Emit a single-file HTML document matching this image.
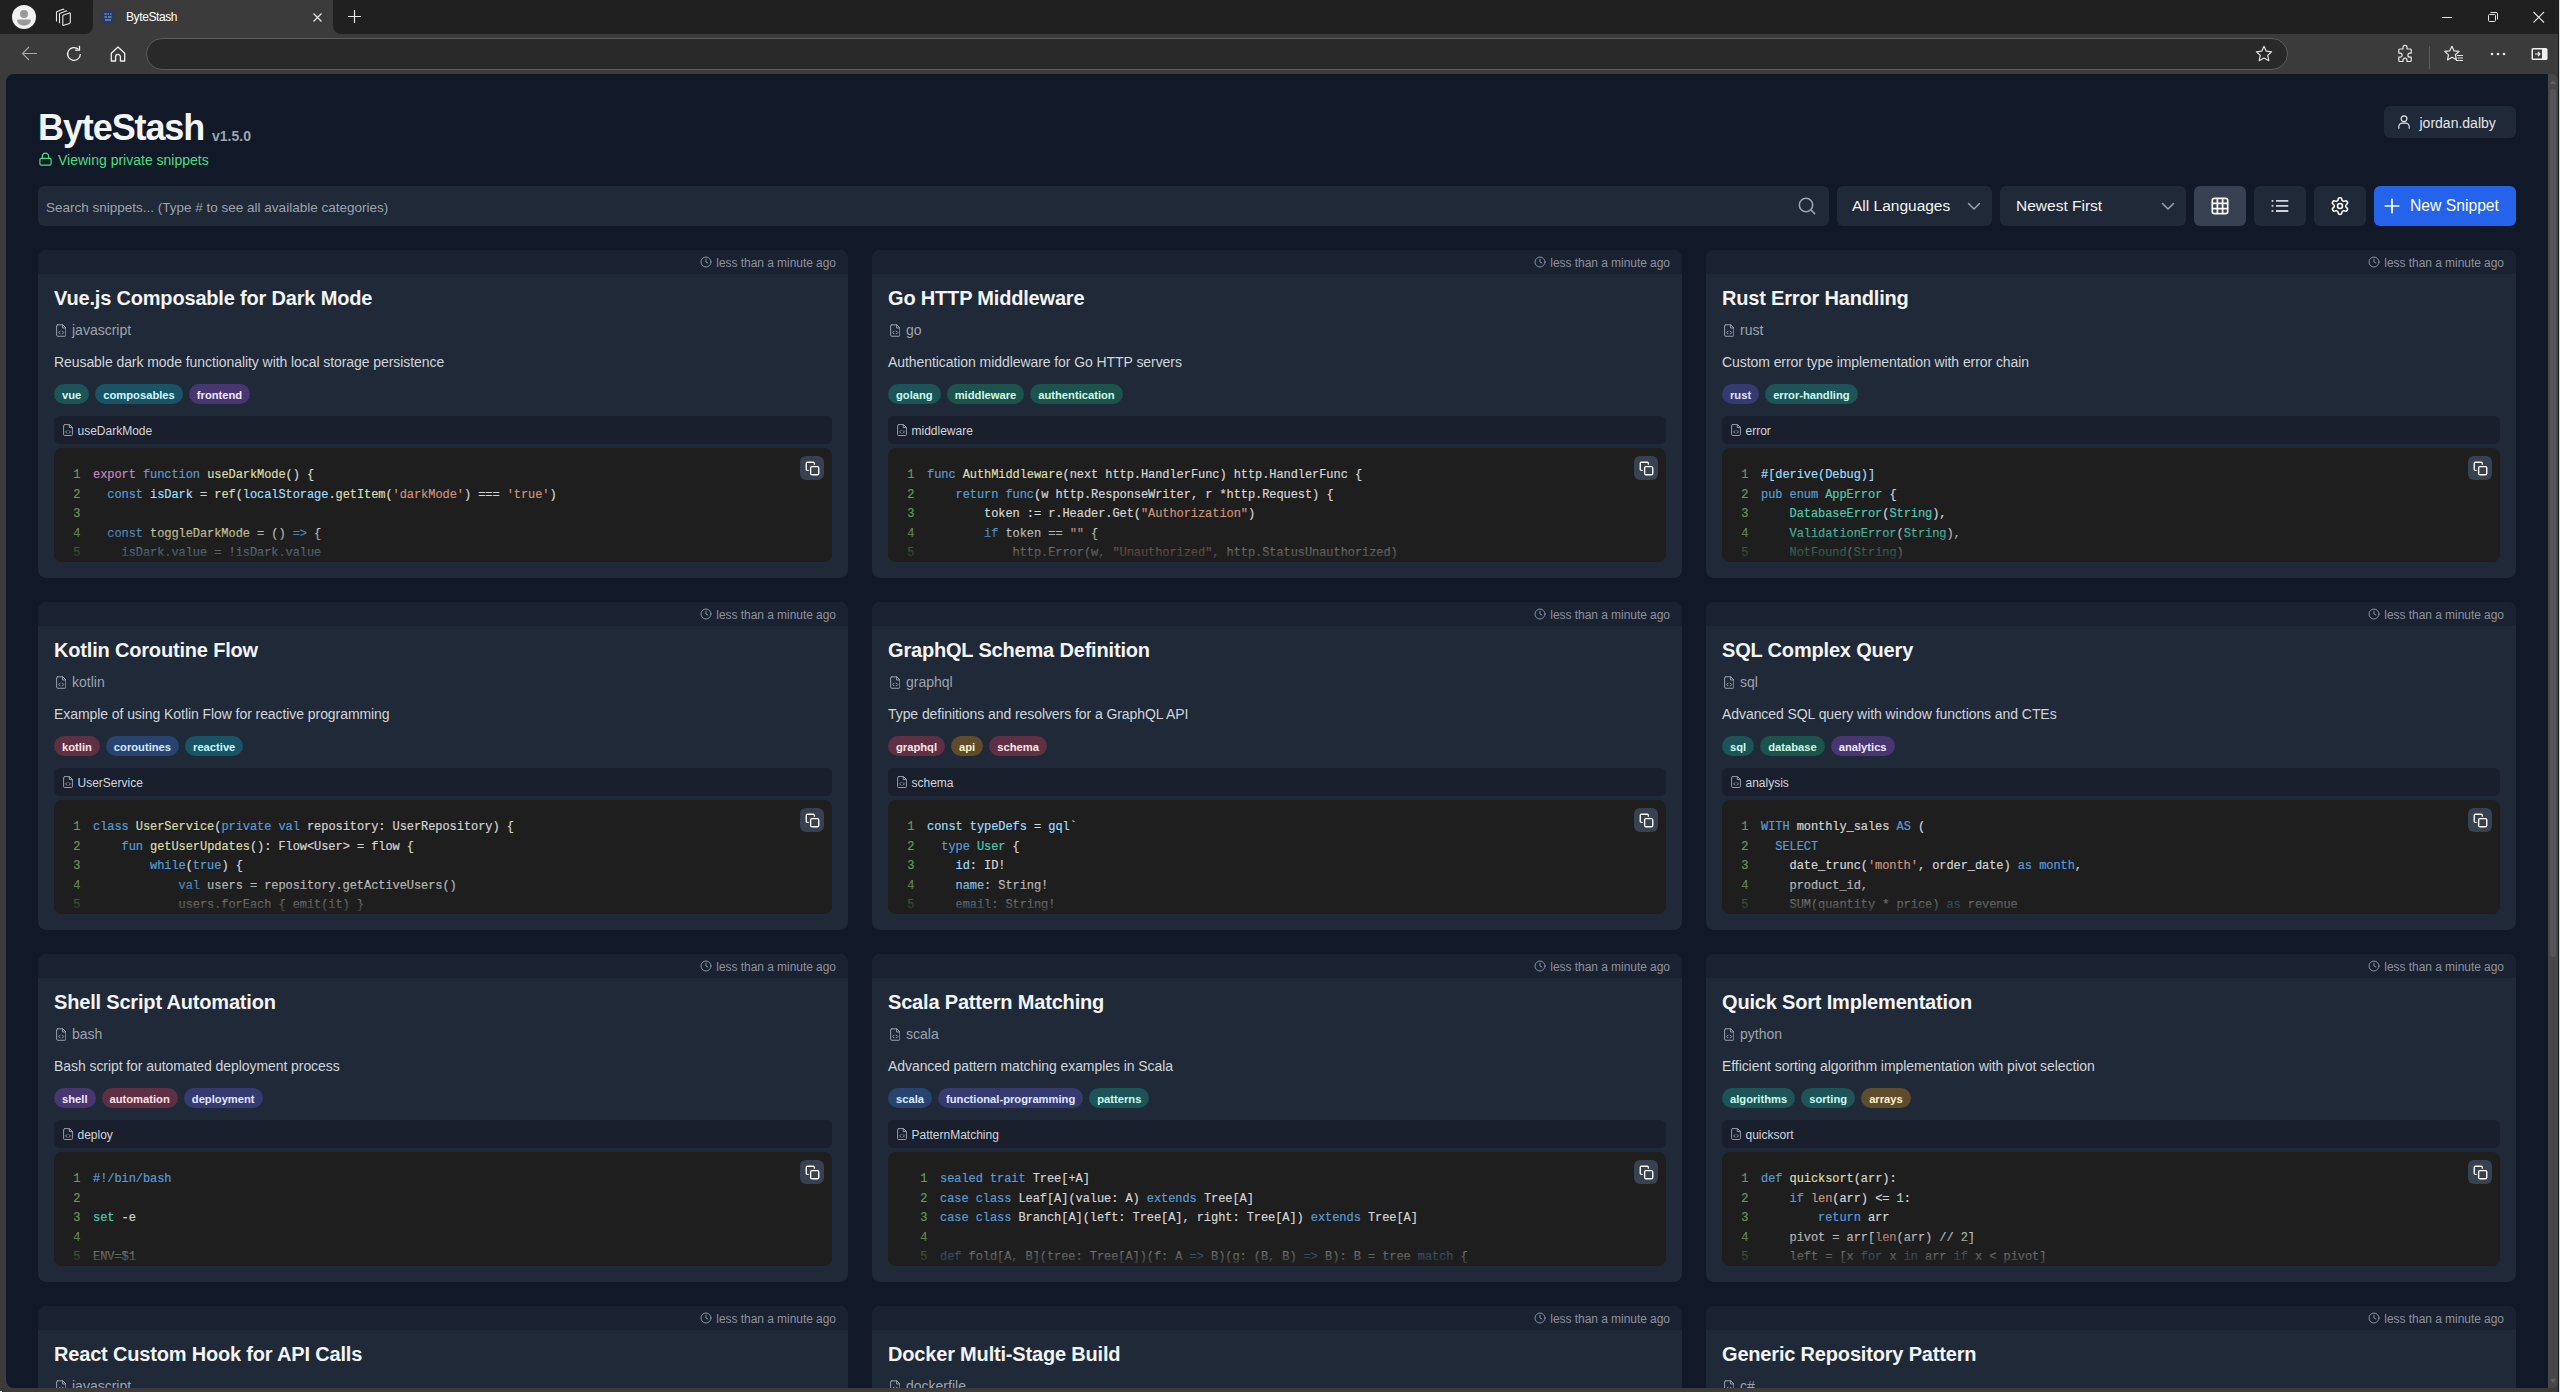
<!DOCTYPE html>
<html><head><meta charset="utf-8"><title>ByteStash</title>
<style>
*{box-sizing:border-box}
html,body{margin:0;padding:0}
body{width:2560px;height:1392px;overflow:hidden;background:#3b3b3b;position:relative;font-family:"Liberation Sans",sans-serif;}
#titlebar{position:absolute;left:0;top:0;width:2560px;height:34px}
#toolbar{position:absolute;left:0;top:34px;width:2560px;height:40px;background:#3b3b3b}
#vp{position:absolute;left:6px;top:74px;width:2542px;height:1314px;background:#111827;border-top-left-radius:8px;border-bottom-left-radius:8px;overflow:hidden}
.abs{position:absolute}
.card{position:absolute;width:810px;height:328px;background:#1f2937;border-radius:8px;overflow:hidden}
.chead{position:absolute;left:0;top:0;width:810px;height:24px;background:#1a2130}
.ts{position:absolute;right:12px;top:5px;height:14px;display:flex;align-items:center;gap:4.5px;color:#8a919e;font-size:12px;white-space:nowrap;letter-spacing:-0.05px}
.ts span{position:relative;top:1px}
.ts svg{width:12px;height:12px}
.ctitle{position:absolute;left:16px;top:36px;font-size:20px;font-weight:700;color:#f3f4f6;white-space:nowrap;line-height:24px;letter-spacing:-0.18px}
.clang{position:absolute;left:16px;top:71px;font-size:14px;color:#9ca3af;display:flex;align-items:center;gap:7.5px;line-height:18px;white-space:nowrap}
.clang svg{width:10.5px;height:13px;position:relative;top:0px;left:1.5px}
.cdesc{position:absolute;left:16px;top:103px;font-size:14px;color:#d1d5db;line-height:18px;white-space:nowrap;letter-spacing:-0.07px}
.ctags{position:absolute;left:16px;top:134px;display:flex;gap:6px}
.tag{display:inline-block;height:20px;line-height:20px;padding:0 8px;border-radius:10px;font-size:11.2px;font-weight:700}
.fbar{position:absolute;left:16px;top:166px;width:778px;height:27.5px;background:#1a1f2d;border-radius:6px;display:flex;align-items:center;gap:4.5px;padding-left:9px;padding-top:2px;color:#9ca3af;font-size:12px}
.fbar svg{width:10px;height:12px;position:relative;top:-1px}
.fbar span{color:#d1d5db}
.cblock{position:absolute;left:16px;top:198px;width:778px;height:114px;background:#1e1e1e;border-radius:8px;overflow:hidden}
.lines{position:absolute;left:0;top:18px;font-family:"Liberation Mono",monospace;font-size:12px;line-height:19.5px;white-space:pre;color:#d4d4d4;letter-spacing:-0.07px}
.ln{height:19.5px}
.num{display:inline-block;text-align:right;color:#6a9955;margin-right:12.5px;padding-left:13.5px;box-sizing:content-box}
.fade{position:absolute;left:0;right:0;bottom:0;height:36px;background:linear-gradient(to bottom,rgba(30,30,30,0),rgba(30,30,30,0.9))}
.copy{position:absolute;right:8px;top:8px;width:24px;height:24px;border-radius:6px;background:#374151;display:flex;align-items:center;justify-content:center;color:#fff}
.tag span{position:relative;top:1px}
.lines{-webkit-text-stroke:0.2px currentColor}

</style></head>
<body>
<div id="titlebar">
  <div class="abs" style="left:0;top:0;width:93px;height:34px;background:#202020;border-bottom-right-radius:8px"></div>
  <div class="abs" style="left:333px;top:0;width:2227px;height:34px;background:#202020;border-bottom-left-radius:8px"></div>
</div>
<div class="abs" style="left:93px;top:0;width:240px;height:40px;background:#3b3b3b;border-top-left-radius:8px;border-top-right-radius:8px"></div>
<!-- profile -->
<svg class="abs" style="left:12px;top:5px" width="24" height="24" viewBox="0 0 24 24"><circle cx="12" cy="12" r="12" fill="#f2f2f2"/><circle cx="12" cy="9" r="4" fill="#9a9a9a"/><path d="M6.2 14.5h11.6a1 1 0 0 1 1 1.2 6.8 5 0 0 1-13.6 0 1 1 0 0 1 1-1.2z" fill="#9a9a9a"/></svg>
<!-- tabs icon -->
<svg class="abs" style="left:55px;top:8px" width="18" height="18" viewBox="0 0 18 18" fill="none" stroke="#e8e8e8" stroke-width="1.1"><path d="M1.5 13.5V4.6q0-.8.8-1.1l5.6-2.2q.9-.3.9.6"/><path d="M4.5 15.2V6.3q0-.8.8-1.1l5.6-2.2q.9-.3.9.6"/><path d="M7.8 16.5V8q0-.8.8-1.1l5.8-1.9q.9-.3.9.6v8.7q0 .8-.8 1.1l-5.8 1.9q-.9.3-.9-.8z"/></svg>
<!-- favicon -->
<svg class="abs" style="left:101px;top:9px" width="14" height="16" viewBox="0 0 14 16"><path d="M3 1.5h8l2 3v7l-2 3H3l-2-3v-7z" fill="#243a6b"/><path d="M3.5 5h2M6.5 5h1.5M9 5h1.5M3.5 8h2.5M7 8h3.5M4 11h6" stroke="#9fb4e0" stroke-width="1.1"/></svg>
<div class="abs" style="left:126px;top:9px;font-size:12px;color:#ffffff;line-height:16px;white-space:nowrap;letter-spacing:-0.4px">ByteStash</div>
<svg class="abs" style="left:312px;top:12px" width="11" height="11" viewBox="0 0 11 11" stroke="#e8e8e8" stroke-width="1.2"><path d="M1.5 1.5l8 8M9.5 1.5l-8 8"/></svg>
<svg class="abs" style="left:347px;top:9px" width="15" height="15" viewBox="0 0 15 15" stroke="#e8e8e8" stroke-width="1.2"><path d="M7.5 1v13M1 7.5h13"/></svg>
<!-- window controls -->
<svg class="abs" style="left:2440px;top:10px" width="14" height="14" viewBox="0 0 14 14" stroke="#e8e8e8" stroke-width="1"><path d="M2 7.5h10"/></svg>
<svg class="abs" style="left:2486px;top:10px" width="14" height="14" viewBox="0 0 14 14" fill="none" stroke="#e8e8e8" stroke-width="1"><rect x="2.5" y="4.5" width="7" height="7" rx="1.2"/><path d="M4.5 2.5h5.5a1.5 1.5 0 0 1 1.5 1.5v5.5"/></svg>
<svg class="abs" style="left:2532px;top:10px" width="14" height="14" viewBox="0 0 14 14" stroke="#e8e8e8" stroke-width="1.1"><path d="M1.5 2l10.5 10.5M12 2L1.5 12.5"/></svg>
<!-- toolbar -->
<svg class="abs" style="left:20px;top:44px" width="20" height="20" viewBox="0 0 20 20" fill="none" stroke="#a8a8a8" stroke-width="1.1"><path d="M17 9.5H2.5M9 3L2.5 9.5 9 16"/></svg>
<svg class="abs" style="left:64px;top:44px" width="20" height="20" viewBox="0 0 20 20" fill="none" stroke="#f0f0f0" stroke-width="1.3"><path d="M16.4 10a6.4 6.4 0 1 1-1.9-4.6"/><path d="M15.5 1.8v4.3h-4.3"/></svg>
<svg class="abs" style="left:108px;top:44px" width="20" height="20" viewBox="0 0 20 20" fill="none" stroke="#f0f0f0" stroke-width="1.3"><path d="M3.3 17V9.2L10 3l6.7 6.2V17h-4.3v-4.2a2.4 2.4 0 0 0-4.8 0V17z" stroke-linejoin="round"/></svg>
<div class="abs" style="left:146px;top:38px;width:2142px;height:32px;background:#292929;border:1px solid #5c5c5c;border-radius:16px"></div>
<svg class="abs" style="left:2254px;top:44px" width="20" height="20" viewBox="0 0 20 20" fill="none" stroke="#e0e0e0" stroke-width="1.2" stroke-linejoin="round"><path d="M10 2.3l2.3 4.9 5.3.6-3.9 3.6 1.1 5.3L10 14l-4.8 2.7 1.1-5.3L2.4 7.8l5.3-.6z"/></svg>
<svg class="abs" style="left:2395px;top:44px" width="20" height="20" viewBox="0 0 20 20" fill="none" stroke="#e8e8e8" stroke-width="1.2" stroke-linejoin="round"><path d="M8 3.3a2 2 0 0 1 4 0V5h3.2a1 1 0 0 1 1 1v3.2h-1.3a2 2 0 0 0 0 4h1.3V16.5a1 1 0 0 1-1 1H12v-1.3a2 2 0 0 0-4 0v1.3H4.8a1 1 0 0 1-1-1V13.2h1.3a2 2 0 0 0 0-4H3.8V6a1 1 0 0 1 1-1H8z"/></svg>
<div class="abs" style="left:2429px;top:46px;width:1px;height:23px;background:#5a5a5a"></div>
<svg class="abs" style="left:2443px;top:44px" width="22" height="20" viewBox="0 0 22 20" fill="none" stroke="#e8e8e8" stroke-width="1.2" stroke-linejoin="round"><path d="M9 2.3l2.1 4.6 5 .5-3.7 3.4 1 5-4.4-2.5-4.5 2.6 1-5L1.7 7.4l5-.5z"/><path d="M14 11.5h6M14.5 14h5.5M13 16.5h7"/></svg>
<svg class="abs" style="left:2488px;top:44px" width="20" height="20" viewBox="0 0 20 20" fill="#e8e8e8"><circle cx="4" cy="10" r="1.3"/><circle cx="10" cy="10" r="1.3"/><circle cx="16" cy="10" r="1.3"/></svg>
<svg class="abs" style="left:2530px;top:46px" width="20" height="16" viewBox="0 0 20 16"><rect x="1.5" y="2" width="16" height="12" rx="1.5" fill="#f0f0f0"/><rect x="3" y="3.5" width="9" height="9" fill="#3b3b3b"/><path d="M5 8h5M8 6l2 2-2 2" stroke="#f0f0f0" stroke-width="1.2" fill="none"/></svg>
<!-- scrollbar -->
<div class="abs" style="left:2548px;top:74px;width:10px;height:1314px;background:#474747;border-top-right-radius:6px;border-bottom-right-radius:6px"></div>
<div class="abs" style="left:2550px;top:89px;width:6px;height:868px;background:#55565a;border-radius:3px"></div>
<svg class="abs" style="left:2549px;top:79px" width="8" height="6" viewBox="0 0 8 6"><path d="M4 1l3 4H1z" fill="#5f5f66"/></svg>
<svg class="abs" style="left:2549px;top:1378px" width="8" height="6" viewBox="0 0 8 6"><path d="M4 5l3-4H1z" fill="#5f5f66"/></svg>
<div class="abs" style="left:2558px;top:0px;width:1px;height:1392px;background:#1c1c1c"></div><div class="abs" style="left:2559px;top:0px;width:1px;height:1392px;background:#d8d8d8"></div>
<div class="abs" style="left:0;top:1391px;width:2px;height:1px;background:#f0f0f0"></div>

<div id="vp">
<div class="abs" style="left:32px;top:34px;font-size:36px;font-weight:700;color:#f3f4f6;line-height:40px;white-space:nowrap;letter-spacing:-1.1px">ByteStash</div>
<div class="abs" style="left:206px;top:53px;font-size:14px;font-weight:700;color:#9ca3af;line-height:18px;white-space:nowrap">v1.5.0</div>
<svg class="abs" style="left:32.5px;top:78px" width="13" height="14" viewBox="0 0 13 14" fill="none" stroke="#4ade80" stroke-width="1.2" stroke-linecap="round" stroke-linejoin="round"><rect x="0.9" y="6.4" width="11.2" height="6.8" rx="1.4"/><path d="M3.4 6.4V4.2a3.1 3.1 0 0 1 6.2 0v2.2"/></svg>
<div class="abs" style="left:52px;top:77px;font-size:14px;color:#4ade80;line-height:18px;white-space:nowrap">Viewing private snippets</div>
<!-- user button -->
<div class="abs" style="left:2378px;top:32px;width:132px;height:32px;background:#1f2937;border-radius:6px"></div>
<svg class="abs" style="left:2392px;top:41px" width="12" height="14" viewBox="0 0 12 14" fill="none" stroke="#e5e7eb" stroke-width="1.2" stroke-linecap="round"><circle cx="6" cy="3.8" r="2.9"/><path d="M0.8 13.2v-1.4a3.6 3.6 0 0 1 3.6-3.6h3.2a3.6 3.6 0 0 1 3.6 3.6v1.4"/></svg>
<div class="abs" style="left:2413.5px;top:41px;font-size:14px;color:#e5e7eb;line-height:16px;white-space:nowrap">jordan.dalby</div>
<!-- search -->
<div class="abs" style="left:32px;top:112px;width:1791px;height:40px;background:#1f2937;border-radius:6px"></div>
<div class="abs" style="left:40px;top:126px;font-size:13.5px;color:#9ca3af;line-height:16px;white-space:nowrap">Search snippets... (Type # to see all available categories)</div>
<svg class="abs" style="left:1792px;top:123px" width="18" height="18" viewBox="0 0 18 18" fill="none" stroke="#9ca3af" stroke-width="1.6" stroke-linecap="round"><circle cx="8" cy="8" r="6.7"/><path d="M12.8 12.8l3.8 3.8"/></svg>
<!-- language select -->
<div class="abs" style="left:1831px;top:112px;width:155px;height:40px;background:#1f2937;border-radius:6px"></div>
<div class="abs" style="left:1846px;top:123px;font-size:15.5px;color:#f3f4f6;line-height:18px;white-space:nowrap">All Languages</div>
<svg class="abs" style="left:1961px;top:128px" width="14" height="9" viewBox="0 0 14 9" fill="none" stroke="#9ca3af" stroke-width="1.5" stroke-linecap="round" stroke-linejoin="round"><path d="M1.5 1.5l5.5 5.5 5.5-5.5"/></svg>
<!-- sort select -->
<div class="abs" style="left:1994px;top:112px;width:186px;height:40px;background:#1f2937;border-radius:6px"></div>
<div class="abs" style="left:2010px;top:123px;font-size:15.5px;color:#f3f4f6;line-height:18px;white-space:nowrap">Newest First</div>
<svg class="abs" style="left:2155px;top:128px" width="14" height="9" viewBox="0 0 14 9" fill="none" stroke="#9ca3af" stroke-width="1.5" stroke-linecap="round" stroke-linejoin="round"><path d="M1.5 1.5l5.5 5.5 5.5-5.5"/></svg>
<!-- grid -->
<div class="abs" style="left:2188px;top:112px;width:52px;height:40px;background:#374151;border-radius:6px"></div>
<svg class="abs" style="left:2205px;top:123px" width="18" height="18" viewBox="0 0 18 18" fill="none" stroke="#ffffff" stroke-width="1.7"><rect x="1.3" y="1.3" width="15.4" height="15.4" rx="2.2"/><path d="M1.3 6.4h15.4M1.3 11.6h15.4M6.4 1.3v15.4M11.6 1.3v15.4"/></svg>
<!-- list -->
<div class="abs" style="left:2248px;top:112px;width:52px;height:40px;background:#1f2937;border-radius:6px"></div>
<svg class="abs" style="left:2264px;top:123px" width="20" height="18" viewBox="0 0 20 18" fill="none" stroke="#d1d5db" stroke-width="1.8"><path d="M6 3.9h12.3M6 8.8h12.3M6 14h12.3"/><path d="M7.5 3.9h0" /><rect x="1.6" y="3" width="1.8" height="1.8" fill="#d1d5db" stroke="none"/><rect x="1.6" y="7.9" width="1.8" height="1.8" fill="#d1d5db" stroke="none"/><rect x="1.6" y="13.1" width="1.8" height="1.8" fill="#d1d5db" stroke="none"/></svg>
<!-- settings -->
<div class="abs" style="left:2308px;top:112px;width:52px;height:40px;background:#1f2937;border-radius:6px"></div>
<svg class="abs" style="left:2324px;top:122px" width="20" height="20" viewBox="0 0 24 24" fill="none" stroke="#ffffff" stroke-width="1.9" stroke-linecap="round" stroke-linejoin="round"><path d="M12.22 2h-.44a2 2 0 0 0-2 2v.18a2 2 0 0 1-1 1.73l-.43.25a2 2 0 0 1-2 0l-.15-.08a2 2 0 0 0-2.73.73l-.22.38a2 2 0 0 0 .73 2.73l.15.1a2 2 0 0 1 1 1.72v.51a2 2 0 0 1-1 1.74l-.15.09a2 2 0 0 0-.73 2.73l.22.38a2 2 0 0 0 2.73.73l.15-.08a2 2 0 0 1 2 0l.43.25a2 2 0 0 1 1 1.73V20a2 2 0 0 0 2 2h.44a2 2 0 0 0 2-2v-.18a2 2 0 0 1 1-1.73l.43-.25a2 2 0 0 1 2 0l.15.08a2 2 0 0 0 2.73-.73l.22-.39a2 2 0 0 0-.73-2.73l-.15-.08a2 2 0 0 1-1-1.74v-.5a2 2 0 0 1 1-1.74l.15-.09a2 2 0 0 0 .73-2.73l-.22-.38a2 2 0 0 0-2.73-.73l-.15.08a2 2 0 0 1-2 0l-.43-.25a2 2 0 0 1-1-1.73V4a2 2 0 0 0-2-2z"/><circle cx="12" cy="12" r="3"/></svg>
<!-- new snippet -->
<div class="abs" style="left:2368px;top:112px;width:142px;height:40px;background:#2563eb;border-radius:6px"></div>
<svg class="abs" style="left:2377px;top:123px" width="18" height="18" viewBox="0 0 18 18" fill="none" stroke="#ffffff" stroke-width="1.7" stroke-linecap="round"><path d="M9 2.3v13.4M2.3 9h13.4"/></svg>
<div class="abs" style="left:2404px;top:123px;font-size:15.7px;color:#ffffff;line-height:18px;white-space:nowrap">New Snippet</div>

<div class="card" style="left:32px;top:176px"><div class="chead"><span class="ts"><svg width="12" height="12" viewBox="0 0 24 24" fill="none" stroke="#9ca3af" stroke-width="1.7" stroke-linecap="round" stroke-linejoin="round"><circle cx="12" cy="12" r="10"/><path d="M12 6v6l4 2"/></svg><span>less than a minute ago</span></span></div><div class="ctitle">Vue.js Composable for Dark Mode</div><div class="clang"><svg viewBox="0 0 10 12" fill="none" stroke="currentColor" stroke-width="0.95" stroke-linecap="round" stroke-linejoin="round"><path d="M1.6 0.6h4.9l2.9 2.9v7a1 1 0 0 1-1 1H1.6a1 1 0 0 1-1-1V1.6a1 1 0 0 1 1-1z"/><path d="M6.3 0.6v3h3"/><path d="M3.9 6.6l-1.3 1.3 1.3 1.3M6.1 6.6l1.3 1.3-1.3 1.3"/></svg><span>javascript</span></div><div class="cdesc">Reusable dark mode functionality with local storage persistence</div><div class="ctags"><span class="tag" style="background:#1c5458;color:#ccfbf1"><span>vue</span></span><span class="tag" style="background:#185366;color:#cffafe"><span>composables</span></span><span class="tag" style="background:#483671;color:#f3e8ff"><span>frontend</span></span></div><div class="fbar"><svg viewBox="0 0 10 12" fill="none" stroke="currentColor" stroke-width="0.95" stroke-linecap="round" stroke-linejoin="round"><path d="M1.6 0.6h4.9l2.9 2.9v7a1 1 0 0 1-1 1H1.6a1 1 0 0 1-1-1V1.6a1 1 0 0 1 1-1z"/><path d="M6.3 0.6v3h3"/><path d="M3.9 6.6l-1.3 1.3 1.3 1.3M6.1 6.6l1.3 1.3-1.3 1.3"/></svg><span>useDarkMode</span></div><div class="cblock"><div class="lines"><div class="ln"><span class="num" style="width:13px">1</span><span class="code"><span style="color:#c586c0">export</span> <span style="color:#569cd6">function</span> <span style="color:#dcdcaa">useDarkMode</span>() {</span></div><div class="ln"><span class="num" style="width:13px">2</span><span class="code">  <span style="color:#569cd6">const</span> <span style="color:#9cdcfe">isDark</span> = <span style="color:#dcdcaa">ref</span>(<span style="color:#9cdcfe">localStorage</span>.<span style="color:#dcdcaa">getItem</span>(<span style="color:#ce9178">'darkMode'</span>) === <span style="color:#ce9178">'true'</span>)</span></div><div class="ln"><span class="num" style="width:13px">3</span><span class="code"></span></div><div class="ln"><span class="num" style="width:13px">4</span><span class="code">  <span style="color:#569cd6">const</span> <span style="color:#dcdcaa">toggleDarkMode</span> = () <span style="color:#569cd6">=&gt;</span> {</span></div><div class="ln"><span class="num" style="width:13px">5</span><span class="code">    <span style="color:#9cdcfe">isDark</span>.<span style="color:#9cdcfe">value</span> = !<span style="color:#9cdcfe">isDark</span>.<span style="color:#9cdcfe">value</span></span></div></div><div class="fade"></div><div class="copy"><svg width="15" height="15" viewBox="0 0 24 24" fill="none" stroke="currentColor" stroke-width="2.2" stroke-linecap="round" stroke-linejoin="round"><rect x="9" y="9" width="13" height="13" rx="2"/><path d="M5 15H4a2 2 0 0 1-2-2V4a2 2 0 0 1 2-2h9a2 2 0 0 1 2 2v1"/></svg></div></div></div><div class="card" style="left:866px;top:176px"><div class="chead"><span class="ts"><svg width="12" height="12" viewBox="0 0 24 24" fill="none" stroke="#9ca3af" stroke-width="1.7" stroke-linecap="round" stroke-linejoin="round"><circle cx="12" cy="12" r="10"/><path d="M12 6v6l4 2"/></svg><span>less than a minute ago</span></span></div><div class="ctitle">Go HTTP Middleware</div><div class="clang"><svg viewBox="0 0 10 12" fill="none" stroke="currentColor" stroke-width="0.95" stroke-linecap="round" stroke-linejoin="round"><path d="M1.6 0.6h4.9l2.9 2.9v7a1 1 0 0 1-1 1H1.6a1 1 0 0 1-1-1V1.6a1 1 0 0 1 1-1z"/><path d="M6.3 0.6v3h3"/><path d="M3.9 6.6l-1.3 1.3 1.3 1.3M6.1 6.6l1.3 1.3-1.3 1.3"/></svg><span>go</span></div><div class="cdesc">Authentication middleware for Go HTTP servers</div><div class="ctags"><span class="tag" style="background:#1c5458;color:#ccfbf1"><span>golang</span></span><span class="tag" style="background:#1b544d;color:#d1fae5"><span>middleware</span></span><span class="tag" style="background:#1b544d;color:#d1fae5"><span>authentication</span></span></div><div class="fbar"><svg viewBox="0 0 10 12" fill="none" stroke="currentColor" stroke-width="0.95" stroke-linecap="round" stroke-linejoin="round"><path d="M1.6 0.6h4.9l2.9 2.9v7a1 1 0 0 1-1 1H1.6a1 1 0 0 1-1-1V1.6a1 1 0 0 1 1-1z"/><path d="M6.3 0.6v3h3"/><path d="M3.9 6.6l-1.3 1.3 1.3 1.3M6.1 6.6l1.3 1.3-1.3 1.3"/></svg><span>middleware</span></div><div class="cblock"><div class="lines"><div class="ln"><span class="num" style="width:13px">1</span><span class="code"><span style="color:#569cd6">func</span> <span style="color:#dcdcaa">AuthMiddleware</span>(next http.HandlerFunc) http.HandlerFunc {</span></div><div class="ln"><span class="num" style="width:13px">2</span><span class="code">    <span style="color:#569cd6">return</span> <span style="color:#569cd6">func</span>(w http.ResponseWriter, r *http.Request) {</span></div><div class="ln"><span class="num" style="width:13px">3</span><span class="code">        token := r.Header.Get(<span style="color:#ce9178">"Authorization"</span>)</span></div><div class="ln"><span class="num" style="width:13px">4</span><span class="code">        <span style="color:#569cd6">if</span> token == <span style="color:#ce9178">""</span> {</span></div><div class="ln"><span class="num" style="width:13px">5</span><span class="code">            http.Error(w, <span style="color:#ce9178">"Unauthorized"</span>, http.StatusUnauthorized)</span></div></div><div class="fade"></div><div class="copy"><svg width="15" height="15" viewBox="0 0 24 24" fill="none" stroke="currentColor" stroke-width="2.2" stroke-linecap="round" stroke-linejoin="round"><rect x="9" y="9" width="13" height="13" rx="2"/><path d="M5 15H4a2 2 0 0 1-2-2V4a2 2 0 0 1 2-2h9a2 2 0 0 1 2 2v1"/></svg></div></div></div><div class="card" style="left:1700px;top:176px"><div class="chead"><span class="ts"><svg width="12" height="12" viewBox="0 0 24 24" fill="none" stroke="#9ca3af" stroke-width="1.7" stroke-linecap="round" stroke-linejoin="round"><circle cx="12" cy="12" r="10"/><path d="M12 6v6l4 2"/></svg><span>less than a minute ago</span></span></div><div class="ctitle">Rust Error Handling</div><div class="clang"><svg viewBox="0 0 10 12" fill="none" stroke="currentColor" stroke-width="0.95" stroke-linecap="round" stroke-linejoin="round"><path d="M1.6 0.6h4.9l2.9 2.9v7a1 1 0 0 1-1 1H1.6a1 1 0 0 1-1-1V1.6a1 1 0 0 1 1-1z"/><path d="M6.3 0.6v3h3"/><path d="M3.9 6.6l-1.3 1.3 1.3 1.3M6.1 6.6l1.3 1.3-1.3 1.3"/></svg><span>rust</span></div><div class="cdesc">Custom error type implementation with error chain</div><div class="ctags"><span class="tag" style="background:#353b70;color:#e0e7ff"><span>rust</span></span><span class="tag" style="background:#1c5458;color:#ccfbf1"><span>error-handling</span></span></div><div class="fbar"><svg viewBox="0 0 10 12" fill="none" stroke="currentColor" stroke-width="0.95" stroke-linecap="round" stroke-linejoin="round"><path d="M1.6 0.6h4.9l2.9 2.9v7a1 1 0 0 1-1 1H1.6a1 1 0 0 1-1-1V1.6a1 1 0 0 1 1-1z"/><path d="M6.3 0.6v3h3"/><path d="M3.9 6.6l-1.3 1.3 1.3 1.3M6.1 6.6l1.3 1.3-1.3 1.3"/></svg><span>error</span></div><div class="cblock"><div class="lines"><div class="ln"><span class="num" style="width:13px">1</span><span class="code"><span style="color:#9cdcfe">#[derive(Debug)]</span></span></div><div class="ln"><span class="num" style="width:13px">2</span><span class="code"><span style="color:#569cd6">pub</span> <span style="color:#569cd6">enum</span> <span style="color:#4ec9b0">AppError</span> {</span></div><div class="ln"><span class="num" style="width:13px">3</span><span class="code">    <span style="color:#4ec9b0">DatabaseError</span>(<span style="color:#4ec9b0">String</span>),</span></div><div class="ln"><span class="num" style="width:13px">4</span><span class="code">    <span style="color:#4ec9b0">ValidationError</span>(<span style="color:#4ec9b0">String</span>),</span></div><div class="ln"><span class="num" style="width:13px">5</span><span class="code">    <span style="color:#4ec9b0">NotFound</span>(<span style="color:#4ec9b0">String</span>)</span></div></div><div class="fade"></div><div class="copy"><svg width="15" height="15" viewBox="0 0 24 24" fill="none" stroke="currentColor" stroke-width="2.2" stroke-linecap="round" stroke-linejoin="round"><rect x="9" y="9" width="13" height="13" rx="2"/><path d="M5 15H4a2 2 0 0 1-2-2V4a2 2 0 0 1 2-2h9a2 2 0 0 1 2 2v1"/></svg></div></div></div><div class="card" style="left:32px;top:528px"><div class="chead"><span class="ts"><svg width="12" height="12" viewBox="0 0 24 24" fill="none" stroke="#9ca3af" stroke-width="1.7" stroke-linecap="round" stroke-linejoin="round"><circle cx="12" cy="12" r="10"/><path d="M12 6v6l4 2"/></svg><span>less than a minute ago</span></span></div><div class="ctitle">Kotlin Coroutine Flow</div><div class="clang"><svg viewBox="0 0 10 12" fill="none" stroke="currentColor" stroke-width="0.95" stroke-linecap="round" stroke-linejoin="round"><path d="M1.6 0.6h4.9l2.9 2.9v7a1 1 0 0 1-1 1H1.6a1 1 0 0 1-1-1V1.6a1 1 0 0 1 1-1z"/><path d="M6.3 0.6v3h3"/><path d="M3.9 6.6l-1.3 1.3 1.3 1.3M6.1 6.6l1.3 1.3-1.3 1.3"/></svg><span>kotlin</span></div><div class="cdesc">Example of using Kotlin Flow for reactive programming</div><div class="ctags"><span class="tag" style="background:#5f3043;color:#ffe4e6"><span>kotlin</span></span><span class="tag" style="background:#274470;color:#dbeafe"><span>coroutines</span></span><span class="tag" style="background:#185366;color:#cffafe"><span>reactive</span></span></div><div class="fbar"><svg viewBox="0 0 10 12" fill="none" stroke="currentColor" stroke-width="0.95" stroke-linecap="round" stroke-linejoin="round"><path d="M1.6 0.6h4.9l2.9 2.9v7a1 1 0 0 1-1 1H1.6a1 1 0 0 1-1-1V1.6a1 1 0 0 1 1-1z"/><path d="M6.3 0.6v3h3"/><path d="M3.9 6.6l-1.3 1.3 1.3 1.3M6.1 6.6l1.3 1.3-1.3 1.3"/></svg><span>UserService</span></div><div class="cblock"><div class="lines"><div class="ln"><span class="num" style="width:13px">1</span><span class="code"><span style="color:#569cd6">class</span> <span style="color:#dcdcaa">UserService</span>(<span style="color:#569cd6">private</span> <span style="color:#569cd6">val</span> repository: UserRepository) {</span></div><div class="ln"><span class="num" style="width:13px">2</span><span class="code">    <span style="color:#569cd6">fun</span> <span style="color:#dcdcaa">getUserUpdates</span>(): Flow&lt;User&gt; = flow {</span></div><div class="ln"><span class="num" style="width:13px">3</span><span class="code">        <span style="color:#569cd6">while</span>(<span style="color:#569cd6">true</span>) {</span></div><div class="ln"><span class="num" style="width:13px">4</span><span class="code">            <span style="color:#569cd6">val</span> users = repository.getActiveUsers()</span></div><div class="ln"><span class="num" style="width:13px">5</span><span class="code">            users.forEach { emit(it) }</span></div></div><div class="fade"></div><div class="copy"><svg width="15" height="15" viewBox="0 0 24 24" fill="none" stroke="currentColor" stroke-width="2.2" stroke-linecap="round" stroke-linejoin="round"><rect x="9" y="9" width="13" height="13" rx="2"/><path d="M5 15H4a2 2 0 0 1-2-2V4a2 2 0 0 1 2-2h9a2 2 0 0 1 2 2v1"/></svg></div></div></div><div class="card" style="left:866px;top:528px"><div class="chead"><span class="ts"><svg width="12" height="12" viewBox="0 0 24 24" fill="none" stroke="#9ca3af" stroke-width="1.7" stroke-linecap="round" stroke-linejoin="round"><circle cx="12" cy="12" r="10"/><path d="M12 6v6l4 2"/></svg><span>less than a minute ago</span></span></div><div class="ctitle">GraphQL Schema Definition</div><div class="clang"><svg viewBox="0 0 10 12" fill="none" stroke="currentColor" stroke-width="0.95" stroke-linecap="round" stroke-linejoin="round"><path d="M1.6 0.6h4.9l2.9 2.9v7a1 1 0 0 1-1 1H1.6a1 1 0 0 1-1-1V1.6a1 1 0 0 1 1-1z"/><path d="M6.3 0.6v3h3"/><path d="M3.9 6.6l-1.3 1.3 1.3 1.3M6.1 6.6l1.3 1.3-1.3 1.3"/></svg><span>graphql</span></div><div class="cdesc">Type definitions and resolvers for a GraphQL API</div><div class="ctags"><span class="tag" style="background:#5f3043;color:#ffe4e6"><span>graphql</span></span><span class="tag" style="background:#5f4c2a;color:#fef3c7"><span>api</span></span><span class="tag" style="background:#5f3043;color:#ffe4e6"><span>schema</span></span></div><div class="fbar"><svg viewBox="0 0 10 12" fill="none" stroke="currentColor" stroke-width="0.95" stroke-linecap="round" stroke-linejoin="round"><path d="M1.6 0.6h4.9l2.9 2.9v7a1 1 0 0 1-1 1H1.6a1 1 0 0 1-1-1V1.6a1 1 0 0 1 1-1z"/><path d="M6.3 0.6v3h3"/><path d="M3.9 6.6l-1.3 1.3 1.3 1.3M6.1 6.6l1.3 1.3-1.3 1.3"/></svg><span>schema</span></div><div class="cblock"><div class="lines"><div class="ln"><span class="num" style="width:13px">1</span><span class="code"><span style="color:#9cdcfe">const typeDefs</span> = <span style="color:#9cdcfe">gql</span>`</span></div><div class="ln"><span class="num" style="width:13px">2</span><span class="code">  <span style="color:#569cd6">type</span> <span style="color:#4ec9b0">User</span> {</span></div><div class="ln"><span class="num" style="width:13px">3</span><span class="code">    <span style="color:#9cdcfe">id</span>: ID!</span></div><div class="ln"><span class="num" style="width:13px">4</span><span class="code">    <span style="color:#9cdcfe">name</span>: String!</span></div><div class="ln"><span class="num" style="width:13px">5</span><span class="code">    <span style="color:#9cdcfe">email</span>: String!</span></div></div><div class="fade"></div><div class="copy"><svg width="15" height="15" viewBox="0 0 24 24" fill="none" stroke="currentColor" stroke-width="2.2" stroke-linecap="round" stroke-linejoin="round"><rect x="9" y="9" width="13" height="13" rx="2"/><path d="M5 15H4a2 2 0 0 1-2-2V4a2 2 0 0 1 2-2h9a2 2 0 0 1 2 2v1"/></svg></div></div></div><div class="card" style="left:1700px;top:528px"><div class="chead"><span class="ts"><svg width="12" height="12" viewBox="0 0 24 24" fill="none" stroke="#9ca3af" stroke-width="1.7" stroke-linecap="round" stroke-linejoin="round"><circle cx="12" cy="12" r="10"/><path d="M12 6v6l4 2"/></svg><span>less than a minute ago</span></span></div><div class="ctitle">SQL Complex Query</div><div class="clang"><svg viewBox="0 0 10 12" fill="none" stroke="currentColor" stroke-width="0.95" stroke-linecap="round" stroke-linejoin="round"><path d="M1.6 0.6h4.9l2.9 2.9v7a1 1 0 0 1-1 1H1.6a1 1 0 0 1-1-1V1.6a1 1 0 0 1 1-1z"/><path d="M6.3 0.6v3h3"/><path d="M3.9 6.6l-1.3 1.3 1.3 1.3M6.1 6.6l1.3 1.3-1.3 1.3"/></svg><span>sql</span></div><div class="cdesc">Advanced SQL query with window functions and CTEs</div><div class="ctags"><span class="tag" style="background:#1c5458;color:#ccfbf1"><span>sql</span></span><span class="tag" style="background:#1b544d;color:#d1fae5"><span>database</span></span><span class="tag" style="background:#483671;color:#f3e8ff"><span>analytics</span></span></div><div class="fbar"><svg viewBox="0 0 10 12" fill="none" stroke="currentColor" stroke-width="0.95" stroke-linecap="round" stroke-linejoin="round"><path d="M1.6 0.6h4.9l2.9 2.9v7a1 1 0 0 1-1 1H1.6a1 1 0 0 1-1-1V1.6a1 1 0 0 1 1-1z"/><path d="M6.3 0.6v3h3"/><path d="M3.9 6.6l-1.3 1.3 1.3 1.3M6.1 6.6l1.3 1.3-1.3 1.3"/></svg><span>analysis</span></div><div class="cblock"><div class="lines"><div class="ln"><span class="num" style="width:13px">1</span><span class="code"><span style="color:#569cd6">WITH</span> monthly_sales <span style="color:#569cd6">AS</span> (</span></div><div class="ln"><span class="num" style="width:13px">2</span><span class="code">  <span style="color:#569cd6">SELECT</span></span></div><div class="ln"><span class="num" style="width:13px">3</span><span class="code">    date_trunc(<span style="color:#ce9178">'month'</span>, order_date) <span style="color:#569cd6">as</span> <span style="color:#569cd6">month</span>,</span></div><div class="ln"><span class="num" style="width:13px">4</span><span class="code">    product_id,</span></div><div class="ln"><span class="num" style="width:13px">5</span><span class="code">    SUM(quantity * price) <span style="color:#569cd6">as</span> revenue</span></div></div><div class="fade"></div><div class="copy"><svg width="15" height="15" viewBox="0 0 24 24" fill="none" stroke="currentColor" stroke-width="2.2" stroke-linecap="round" stroke-linejoin="round"><rect x="9" y="9" width="13" height="13" rx="2"/><path d="M5 15H4a2 2 0 0 1-2-2V4a2 2 0 0 1 2-2h9a2 2 0 0 1 2 2v1"/></svg></div></div></div><div class="card" style="left:32px;top:880px"><div class="chead"><span class="ts"><svg width="12" height="12" viewBox="0 0 24 24" fill="none" stroke="#9ca3af" stroke-width="1.7" stroke-linecap="round" stroke-linejoin="round"><circle cx="12" cy="12" r="10"/><path d="M12 6v6l4 2"/></svg><span>less than a minute ago</span></span></div><div class="ctitle">Shell Script Automation</div><div class="clang"><svg viewBox="0 0 10 12" fill="none" stroke="currentColor" stroke-width="0.95" stroke-linecap="round" stroke-linejoin="round"><path d="M1.6 0.6h4.9l2.9 2.9v7a1 1 0 0 1-1 1H1.6a1 1 0 0 1-1-1V1.6a1 1 0 0 1 1-1z"/><path d="M6.3 0.6v3h3"/><path d="M3.9 6.6l-1.3 1.3 1.3 1.3M6.1 6.6l1.3 1.3-1.3 1.3"/></svg><span>bash</span></div><div class="cdesc">Bash script for automated deployment process</div><div class="ctags"><span class="tag" style="background:#483671;color:#f3e8ff"><span>shell</span></span><span class="tag" style="background:#5f3043;color:#ffe4e6"><span>automation</span></span><span class="tag" style="background:#353b70;color:#e0e7ff"><span>deployment</span></span></div><div class="fbar"><svg viewBox="0 0 10 12" fill="none" stroke="currentColor" stroke-width="0.95" stroke-linecap="round" stroke-linejoin="round"><path d="M1.6 0.6h4.9l2.9 2.9v7a1 1 0 0 1-1 1H1.6a1 1 0 0 1-1-1V1.6a1 1 0 0 1 1-1z"/><path d="M6.3 0.6v3h3"/><path d="M3.9 6.6l-1.3 1.3 1.3 1.3M6.1 6.6l1.3 1.3-1.3 1.3"/></svg><span>deploy</span></div><div class="cblock"><div class="lines"><div class="ln"><span class="num" style="width:13px">1</span><span class="code"><span style="color:#569cd6">#!/bin/bash</span></span></div><div class="ln"><span class="num" style="width:13px">2</span><span class="code"></span></div><div class="ln"><span class="num" style="width:13px">3</span><span class="code"><span style="color:#4ec9b0">set</span> -e</span></div><div class="ln"><span class="num" style="width:13px">4</span><span class="code"></span></div><div class="ln"><span class="num" style="width:13px">5</span><span class="code">ENV=$1</span></div></div><div class="fade"></div><div class="copy"><svg width="15" height="15" viewBox="0 0 24 24" fill="none" stroke="currentColor" stroke-width="2.2" stroke-linecap="round" stroke-linejoin="round"><rect x="9" y="9" width="13" height="13" rx="2"/><path d="M5 15H4a2 2 0 0 1-2-2V4a2 2 0 0 1 2-2h9a2 2 0 0 1 2 2v1"/></svg></div></div></div><div class="card" style="left:866px;top:880px"><div class="chead"><span class="ts"><svg width="12" height="12" viewBox="0 0 24 24" fill="none" stroke="#9ca3af" stroke-width="1.7" stroke-linecap="round" stroke-linejoin="round"><circle cx="12" cy="12" r="10"/><path d="M12 6v6l4 2"/></svg><span>less than a minute ago</span></span></div><div class="ctitle">Scala Pattern Matching</div><div class="clang"><svg viewBox="0 0 10 12" fill="none" stroke="currentColor" stroke-width="0.95" stroke-linecap="round" stroke-linejoin="round"><path d="M1.6 0.6h4.9l2.9 2.9v7a1 1 0 0 1-1 1H1.6a1 1 0 0 1-1-1V1.6a1 1 0 0 1 1-1z"/><path d="M6.3 0.6v3h3"/><path d="M3.9 6.6l-1.3 1.3 1.3 1.3M6.1 6.6l1.3 1.3-1.3 1.3"/></svg><span>scala</span></div><div class="cdesc">Advanced pattern matching examples in Scala</div><div class="ctags"><span class="tag" style="background:#274470;color:#dbeafe"><span>scala</span></span><span class="tag" style="background:#353b70;color:#e0e7ff"><span>functional-programming</span></span><span class="tag" style="background:#1c5458;color:#ccfbf1"><span>patterns</span></span></div><div class="fbar"><svg viewBox="0 0 10 12" fill="none" stroke="currentColor" stroke-width="0.95" stroke-linecap="round" stroke-linejoin="round"><path d="M1.6 0.6h4.9l2.9 2.9v7a1 1 0 0 1-1 1H1.6a1 1 0 0 1-1-1V1.6a1 1 0 0 1 1-1z"/><path d="M6.3 0.6v3h3"/><path d="M3.9 6.6l-1.3 1.3 1.3 1.3M6.1 6.6l1.3 1.3-1.3 1.3"/></svg><span>PatternMatching</span></div><div class="cblock"><div class="lines"><div class="ln"><span class="num" style="width:26px">1</span><span class="code"><span style="color:#569cd6">sealed</span> <span style="color:#569cd6">trait</span> Tree[+A]</span></div><div class="ln"><span class="num" style="width:26px">2</span><span class="code"><span style="color:#569cd6">case</span> <span style="color:#569cd6">class</span> Leaf[A](value: A) <span style="color:#569cd6">extends</span> Tree[A]</span></div><div class="ln"><span class="num" style="width:26px">3</span><span class="code"><span style="color:#569cd6">case</span> <span style="color:#569cd6">class</span> Branch[A](left: Tree[A], right: Tree[A]) <span style="color:#569cd6">extends</span> Tree[A]</span></div><div class="ln"><span class="num" style="width:26px">4</span><span class="code"></span></div><div class="ln"><span class="num" style="width:26px">5</span><span class="code"><span style="color:#569cd6">def</span> fold[A, B](tree: Tree[A])(f: A <span style="color:#569cd6">=&gt;</span> B)(g: (B, B) <span style="color:#569cd6">=&gt;</span> B): B = tree <span style="color:#569cd6">match</span> {</span></div></div><div class="fade"></div><div class="copy"><svg width="15" height="15" viewBox="0 0 24 24" fill="none" stroke="currentColor" stroke-width="2.2" stroke-linecap="round" stroke-linejoin="round"><rect x="9" y="9" width="13" height="13" rx="2"/><path d="M5 15H4a2 2 0 0 1-2-2V4a2 2 0 0 1 2-2h9a2 2 0 0 1 2 2v1"/></svg></div></div></div><div class="card" style="left:1700px;top:880px"><div class="chead"><span class="ts"><svg width="12" height="12" viewBox="0 0 24 24" fill="none" stroke="#9ca3af" stroke-width="1.7" stroke-linecap="round" stroke-linejoin="round"><circle cx="12" cy="12" r="10"/><path d="M12 6v6l4 2"/></svg><span>less than a minute ago</span></span></div><div class="ctitle">Quick Sort Implementation</div><div class="clang"><svg viewBox="0 0 10 12" fill="none" stroke="currentColor" stroke-width="0.95" stroke-linecap="round" stroke-linejoin="round"><path d="M1.6 0.6h4.9l2.9 2.9v7a1 1 0 0 1-1 1H1.6a1 1 0 0 1-1-1V1.6a1 1 0 0 1 1-1z"/><path d="M6.3 0.6v3h3"/><path d="M3.9 6.6l-1.3 1.3 1.3 1.3M6.1 6.6l1.3 1.3-1.3 1.3"/></svg><span>python</span></div><div class="cdesc">Efficient sorting algorithm implementation with pivot selection</div><div class="ctags"><span class="tag" style="background:#1c5458;color:#ccfbf1"><span>algorithms</span></span><span class="tag" style="background:#1c5458;color:#ccfbf1"><span>sorting</span></span><span class="tag" style="background:#5f4c2a;color:#fef3c7"><span>arrays</span></span></div><div class="fbar"><svg viewBox="0 0 10 12" fill="none" stroke="currentColor" stroke-width="0.95" stroke-linecap="round" stroke-linejoin="round"><path d="M1.6 0.6h4.9l2.9 2.9v7a1 1 0 0 1-1 1H1.6a1 1 0 0 1-1-1V1.6a1 1 0 0 1 1-1z"/><path d="M6.3 0.6v3h3"/><path d="M3.9 6.6l-1.3 1.3 1.3 1.3M6.1 6.6l1.3 1.3-1.3 1.3"/></svg><span>quicksort</span></div><div class="cblock"><div class="lines"><div class="ln"><span class="num" style="width:13px">1</span><span class="code"><span style="color:#569cd6">def</span> <span style="color:#dcdcaa">quicksort</span>(arr):</span></div><div class="ln"><span class="num" style="width:13px">2</span><span class="code">    <span style="color:#569cd6">if</span> <span style="color:#ce9178">len</span>(arr) &lt;= <span style="color:#b5cea8">1</span>:</span></div><div class="ln"><span class="num" style="width:13px">3</span><span class="code">        <span style="color:#569cd6">return</span> arr</span></div><div class="ln"><span class="num" style="width:13px">4</span><span class="code">    pivot = arr[<span style="color:#ce9178">len</span>(arr) // <span style="color:#b5cea8">2</span>]</span></div><div class="ln"><span class="num" style="width:13px">5</span><span class="code">    left = [x <span style="color:#569cd6">for</span> x <span style="color:#569cd6">in</span> arr <span style="color:#569cd6">if</span> x &lt; pivot]</span></div></div><div class="fade"></div><div class="copy"><svg width="15" height="15" viewBox="0 0 24 24" fill="none" stroke="currentColor" stroke-width="2.2" stroke-linecap="round" stroke-linejoin="round"><rect x="9" y="9" width="13" height="13" rx="2"/><path d="M5 15H4a2 2 0 0 1-2-2V4a2 2 0 0 1 2-2h9a2 2 0 0 1 2 2v1"/></svg></div></div></div><div class="card" style="left:32px;top:1232px"><div class="chead"><span class="ts"><svg width="12" height="12" viewBox="0 0 24 24" fill="none" stroke="#9ca3af" stroke-width="1.7" stroke-linecap="round" stroke-linejoin="round"><circle cx="12" cy="12" r="10"/><path d="M12 6v6l4 2"/></svg><span>less than a minute ago</span></span></div><div class="ctitle">React Custom Hook for API Calls</div><div class="clang"><svg viewBox="0 0 10 12" fill="none" stroke="currentColor" stroke-width="0.95" stroke-linecap="round" stroke-linejoin="round"><path d="M1.6 0.6h4.9l2.9 2.9v7a1 1 0 0 1-1 1H1.6a1 1 0 0 1-1-1V1.6a1 1 0 0 1 1-1z"/><path d="M6.3 0.6v3h3"/><path d="M3.9 6.6l-1.3 1.3 1.3 1.3M6.1 6.6l1.3 1.3-1.3 1.3"/></svg><span>javascript</span></div></div><div class="card" style="left:866px;top:1232px"><div class="chead"><span class="ts"><svg width="12" height="12" viewBox="0 0 24 24" fill="none" stroke="#9ca3af" stroke-width="1.7" stroke-linecap="round" stroke-linejoin="round"><circle cx="12" cy="12" r="10"/><path d="M12 6v6l4 2"/></svg><span>less than a minute ago</span></span></div><div class="ctitle">Docker Multi-Stage Build</div><div class="clang"><svg viewBox="0 0 10 12" fill="none" stroke="currentColor" stroke-width="0.95" stroke-linecap="round" stroke-linejoin="round"><path d="M1.6 0.6h4.9l2.9 2.9v7a1 1 0 0 1-1 1H1.6a1 1 0 0 1-1-1V1.6a1 1 0 0 1 1-1z"/><path d="M6.3 0.6v3h3"/><path d="M3.9 6.6l-1.3 1.3 1.3 1.3M6.1 6.6l1.3 1.3-1.3 1.3"/></svg><span>dockerfile</span></div></div><div class="card" style="left:1700px;top:1232px"><div class="chead"><span class="ts"><svg width="12" height="12" viewBox="0 0 24 24" fill="none" stroke="#9ca3af" stroke-width="1.7" stroke-linecap="round" stroke-linejoin="round"><circle cx="12" cy="12" r="10"/><path d="M12 6v6l4 2"/></svg><span>less than a minute ago</span></span></div><div class="ctitle">Generic Repository Pattern</div><div class="clang"><svg viewBox="0 0 10 12" fill="none" stroke="currentColor" stroke-width="0.95" stroke-linecap="round" stroke-linejoin="round"><path d="M1.6 0.6h4.9l2.9 2.9v7a1 1 0 0 1-1 1H1.6a1 1 0 0 1-1-1V1.6a1 1 0 0 1 1-1z"/><path d="M6.3 0.6v3h3"/><path d="M3.9 6.6l-1.3 1.3 1.3 1.3M6.1 6.6l1.3 1.3-1.3 1.3"/></svg><span>c#</span></div></div>
</div>
</body></html>
